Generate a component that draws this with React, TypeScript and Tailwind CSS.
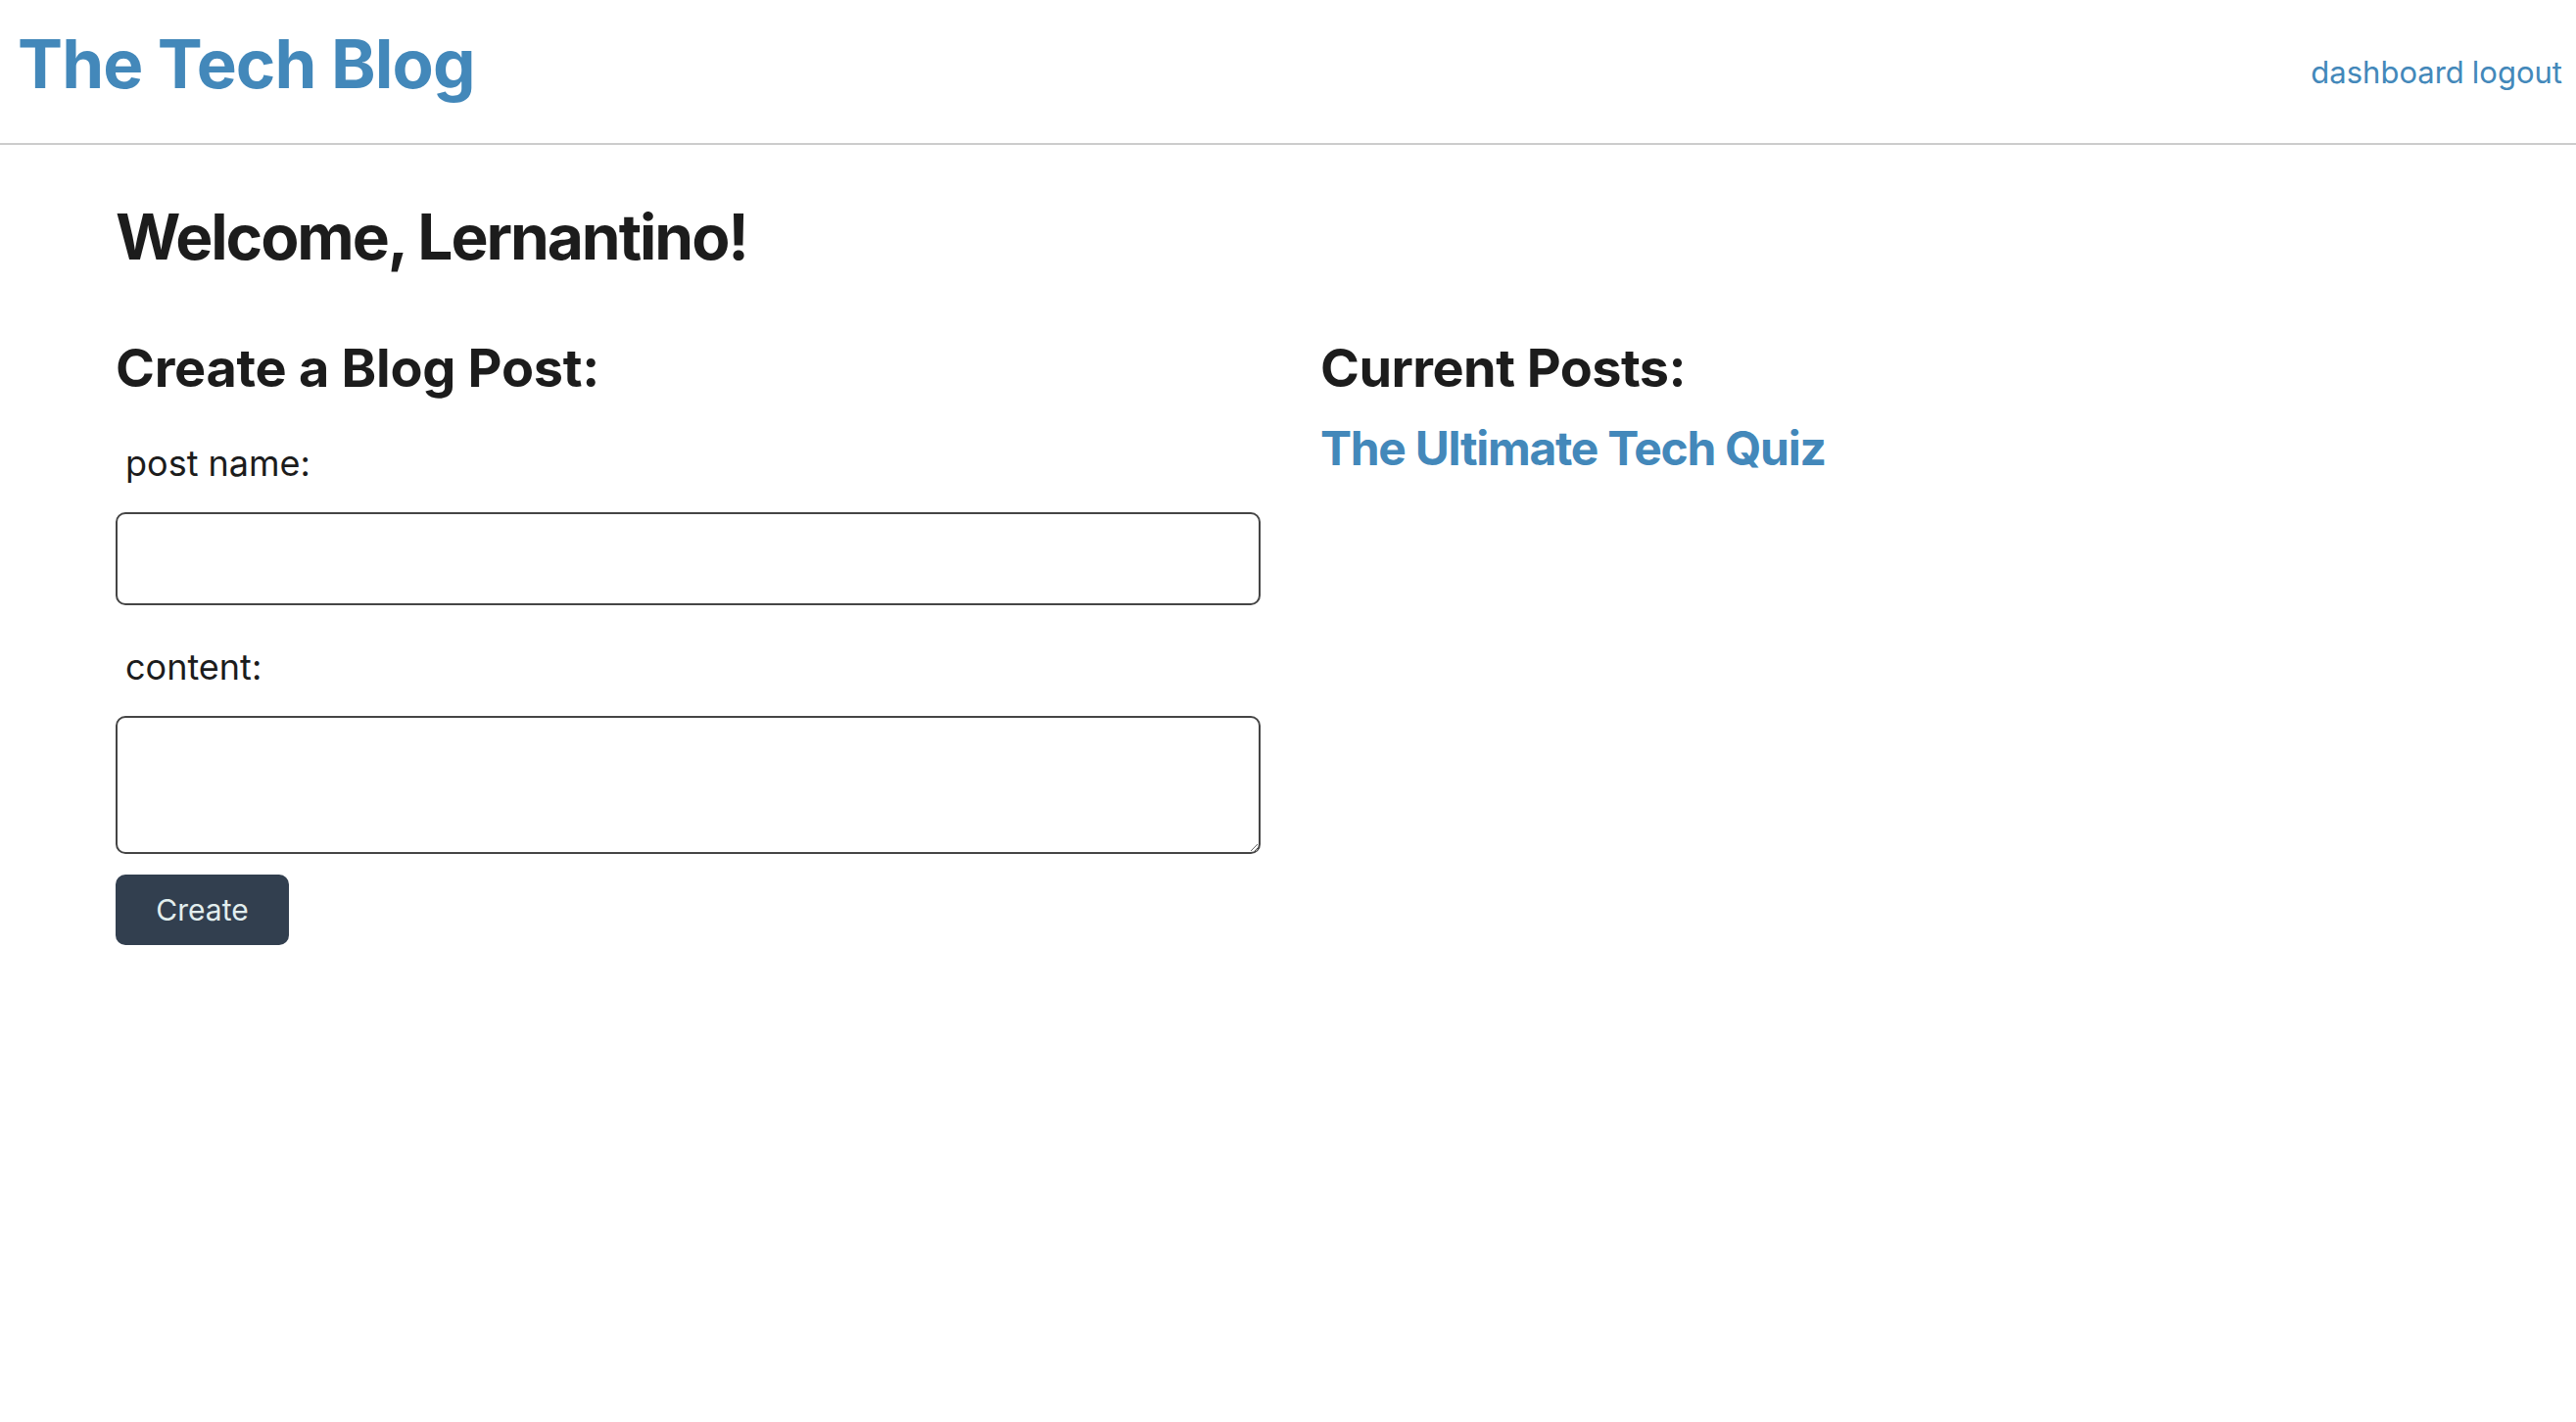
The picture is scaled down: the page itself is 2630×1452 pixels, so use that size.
export default function App() {
  return (
    <div className="min-h-screen bg-white font-['Inter',sans-serif] text-[#1c1c1c]">
      <header className="flex h-[148px] items-start justify-between border-b-2 border-[#cccccc] pl-[18px] pr-[14px]">
        <h1 className="mt-[31px] text-[69px] font-bold leading-none tracking-[-0.013em] text-[#4388ba]">
          The Tech Blog
        </h1>
        <nav className="mt-[58px] flex gap-[8px] text-[31px] leading-none text-[#4388ba]">
          <a href="#">dashboard</a>
          <a href="#">logout</a>
        </nav>
      </header>

      <main className="px-[118px]">
        <h2 className="mt-[62px] text-[64px] font-bold leading-none tracking-[-0.032em]">Welcome, Lernantino!</h2>

        <div className="mt-[75px] grid grid-cols-[1169px_1fr] gap-[61px]">
          <section>
            <h3 className="text-[54px] font-bold leading-none tracking-[-0.005em]">Create a Blog Post:</h3>
            <form className="flex flex-col">
              <label htmlFor="post-name" className="mt-[52px] pl-[10px] text-[36px] leading-none">
                post name:
              </label>
              <input
                id="post-name"
                type="text"
                className="mt-[32px] h-[95px] w-full rounded-[10px] border-2 border-[#454545] px-3 text-[30px]"
              />
              <label htmlFor="content" className="mt-[45px] pl-[10px] text-[36px] leading-none">
                content:
              </label>
              <textarea
                id="content"
                className="mt-[32px] h-[141px] w-full rounded-[10px] border-2 border-[#454545] px-3 text-[30px]"
              />
              <button
                type="button"
                className="mt-[21px] h-[72px] w-[177px] rounded-[10px] bg-[#323f4f] text-[30px] text-[#e2eeee]"
              >
                Create
              </button>
            </form>
          </section>

          <section>
            <h3 className="text-[54px] font-bold leading-none tracking-[-0.01em]">Current Posts:</h3>
            <a
              href="#"
              className="mt-[31px] block text-[48px] font-bold leading-none tracking-[-0.027em] text-[#4388ba]"
            >
              The Ultimate Tech Quiz
            </a>
          </section>
        </div>
      </main>
    </div>
  );
}
